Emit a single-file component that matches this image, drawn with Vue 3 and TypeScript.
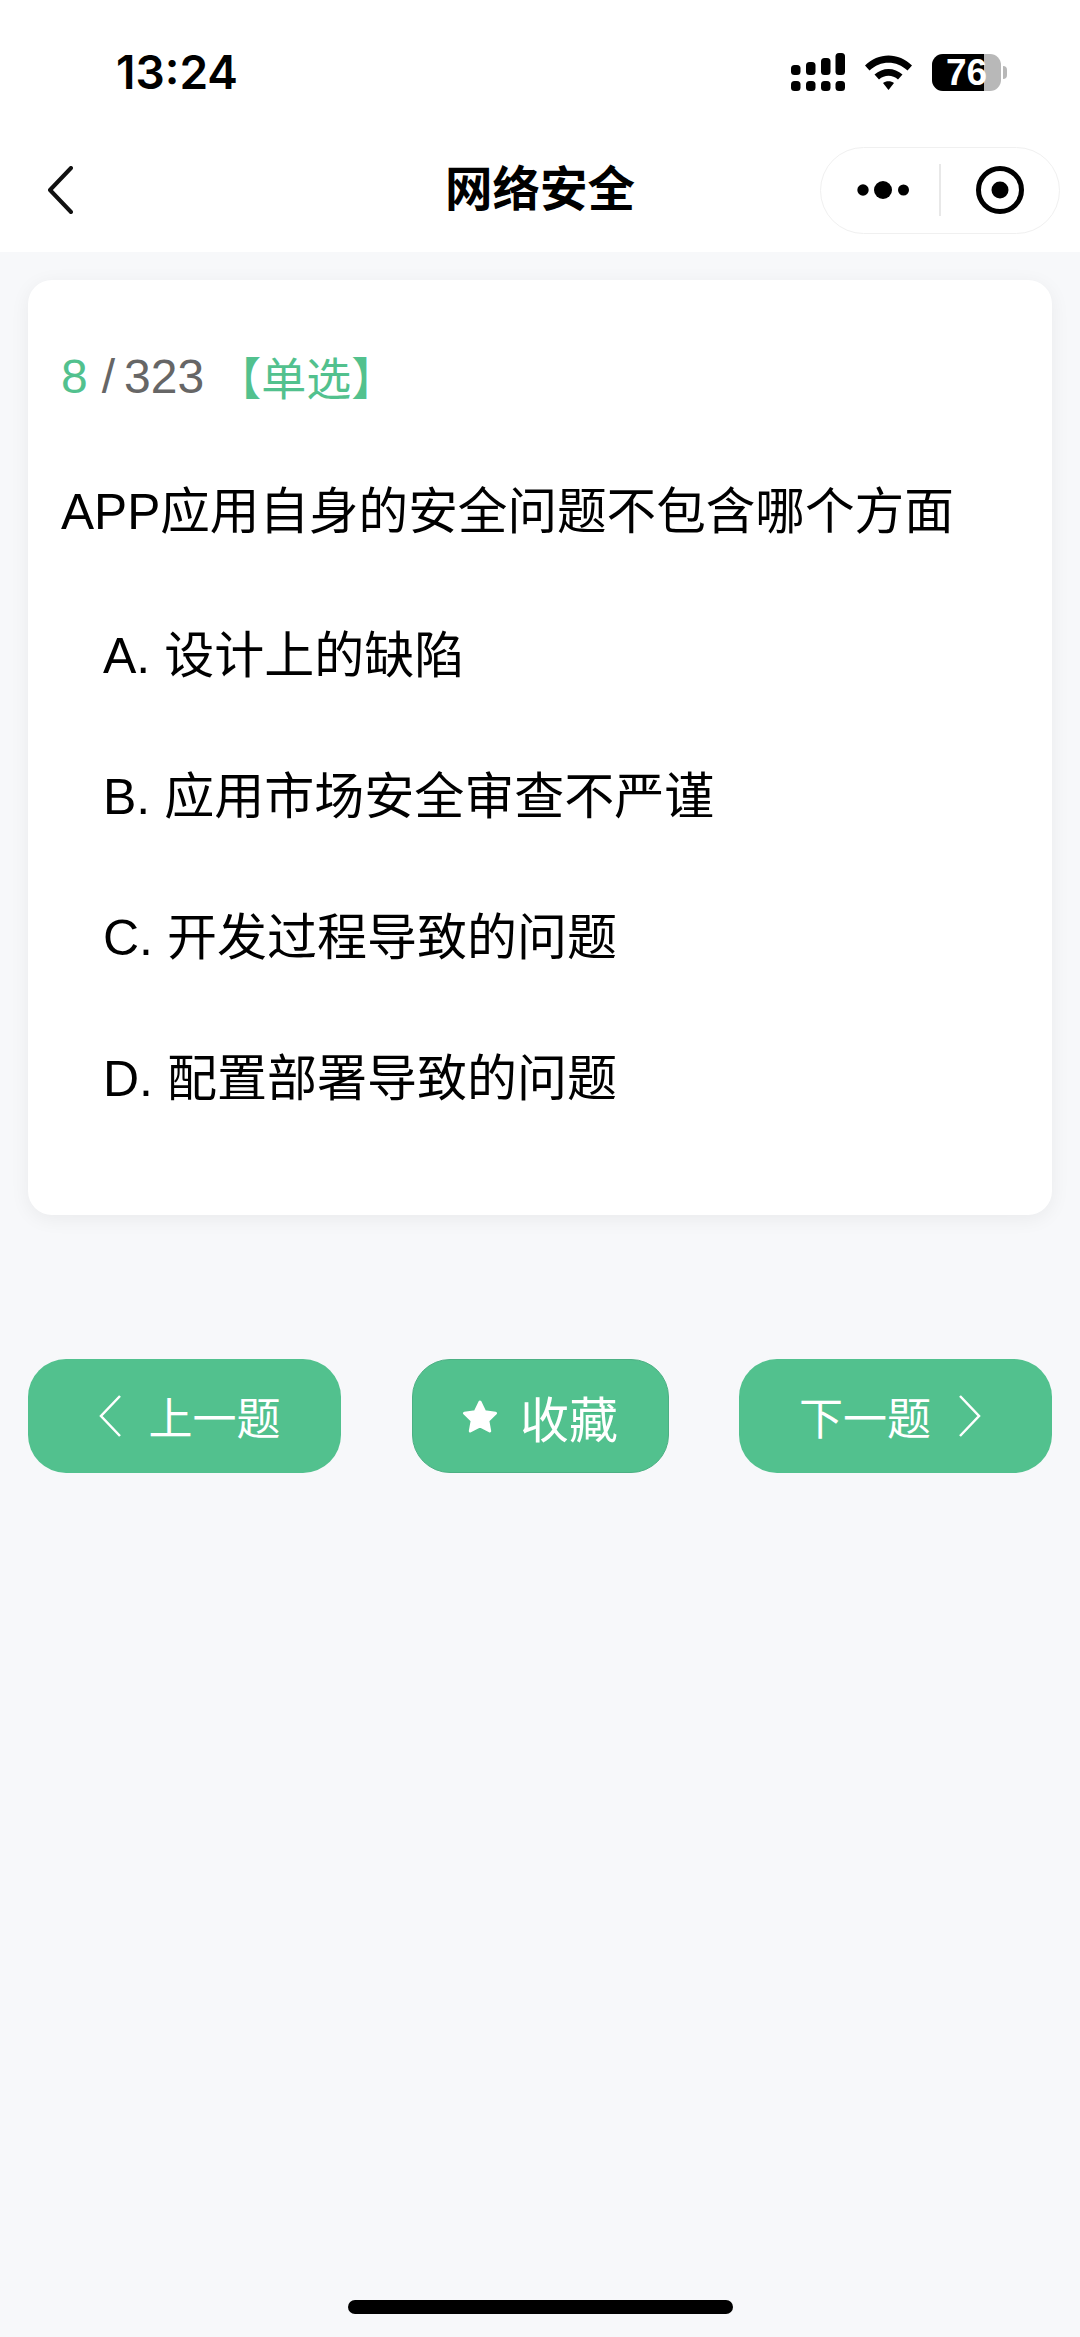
<script setup lang="ts">
const options = [
  { key: 'A', text: '设计上的缺陷' },
  { key: 'B', text: '应用市场安全审查不严谨' },
  { key: 'C', text: '开发过程导致的问题' },
  { key: 'D', text: '配置部署导致的问题' },
]

// upper segment of each signal bar, the lower row is all the same
const signalBars = [
  { x: 0, y: 12 },
  { x: 15, y: 9 },
  { x: 30, y: 5 },
  { x: 44.500, y: 0 },
]
</script>

<template>
  <div class="page">
    <header class="top">
      <div class="status">
        <span class="time">13:24</span>
        <div class="status-icons">
          <svg class="signal" width="54" height="38" viewBox="0 0 54 38">
            <g v-for="bar in signalBars" :key="bar.x">
              <rect :x="bar.x" :y="bar.y" width="9.500" :height="22 - bar.y" rx="3.500" />
              <rect :x="bar.x" y="28" width="9.500" height="10" rx="3.500" />
            </g>
          </svg>
          <svg class="wifi" width="47" height="35" viewBox="0 0 47 35">
            <path d="M0 10.500C13-3 34-3 47 10.500L42.500 15.500C31.500 5 15.500 5 4.500 15.500Z" />
            <path d="M9.500 19.500C17.500 12 29.500 12 37.500 19.500L33 24.500C27.500 19.500 19.500 19.500 14 24.500Z" />
            <path d="M18 28C21 25.500 26 25.500 29 28L23.500 35Z" />
          </svg>
          <div class="battery">
            <div class="battery-body">
              <div class="battery-fill"></div>
              <span class="battery-num">76</span>
            </div>
            <div class="battery-nub"></div>
          </div>
        </div>
      </div>
      <nav class="nav">
        <svg class="back" width="26" height="48" viewBox="0 0 26 48">
          <path d="M24 2L3 24L24 46" />
        </svg>
        <h1 class="title">网络安全</h1>
        <div class="capsule">
          <svg class="more" width="52" height="20" viewBox="0 0 52 20">
            <circle cx="6" cy="10" r="5.700" />
            <circle cx="26" cy="10" r="9" />
            <circle cx="46.500" cy="10" r="5.500" />
          </svg>
          <span class="capsule-line"></span>
          <svg class="target" width="48" height="48" viewBox="0 0 48 48">
            <circle class="target-ring" cx="24" cy="24" r="21.500" />
            <circle cx="24" cy="24" r="8.500" />
          </svg>
        </div>
      </nav>
    </header>

    <main class="content">
      <section class="card">
        <div class="progress">
          <span class="current">8</span>
          <span class="slash">/</span>
          <span class="total">323</span>
          <span class="kind">【单选】</span>
        </div>
        <p class="question">APP应用自身的安全问题不包含哪个方面</p>
        <ul class="options">
          <li v-for="opt in options" :key="opt.key" class="option">{{ opt.key }}. {{ opt.text }}</li>
        </ul>
      </section>

      <div class="actions">
        <button class="btn btn-side btn-prev">
          <svg class="chev" width="22" height="42" viewBox="0 0 22 42"><path d="M21 1L2 21L21 41" /></svg>
          <span>上一题</span>
        </button>
        <button class="btn btn-fav">
          <svg class="star" width="36" height="34" viewBox="0 0 36 34">
            <path d="M18 3L22.800 12.800L33.500 14.200L25.800 21.600L27.700 32L18 27L8.300 32L10.200 21.600L2.500 14.200L13.200 12.800Z" />
          </svg>
          <span>收藏</span>
        </button>
        <button class="btn btn-side btn-next">
          <span>下一题</span>
          <svg class="chev" width="22" height="42" viewBox="0 0 22 42"><path d="M1 1L20 21L1 41" /></svg>
        </button>
      </div>
    </main>

    <div class="home-bar"></div>
  </div>
</template>

<style scoped>
.page {
  position: relative;
  height: 2337px;
  overflow: hidden;
  background: #f7f8fa;
  font-family: "Liberation Sans", "Noto Sans CJK SC", sans-serif;
  color: #000;
}

.top {
  background: #fff;
  height: 252px;
}

.status {
  height: 128px;
  box-sizing: border-box;
  display: flex;
  justify-content: space-between;
  align-items: center;
  padding: 16px 73px 0 116px;
}

.time {
  font-family: Inter, "Liberation Sans", sans-serif;
  font-size: 46px;
  font-weight: 600;
  line-height: 1;
}

.status-icons {
  display: flex;
  align-items: center;
  gap: 20px;
}

.signal,
.wifi {
  fill: #000;
  display: block;
}

.battery {
  display: flex;
  align-items: center;
  gap: 2px;
}

.battery-body {
  position: relative;
  width: 69px;
  height: 37px;
  border-radius: 11px;
  background: #b8b8b8;
  display: flex;
  align-items: center;
  justify-content: center;
}

.battery-fill {
  position: absolute;
  left: 0;
  top: 0;
  bottom: 0;
  width: 76%;
  border-radius: 11px 0 0 11px;
  background: #000;
}

.battery-num {
  position: relative;
  color: #fff;
  font-size: 37px;
  font-weight: 700;
  line-height: 1;
}

.battery-nub {
  width: 4px;
  height: 13px;
  border-radius: 0 4px 4px 0;
  background: #b8b8b8;
}

.nav {
  position: relative;
  height: 124px;
  display: flex;
  align-items: center;
  justify-content: space-between;
  padding: 0 20px 0 47px;
}

.back path {
  fill: none;
  stroke: #111;
  stroke-width: 4;
  stroke-linecap: round;
  stroke-linejoin: round;
}

.title {
  position: absolute;
  left: 0;
  right: 0;
  margin: 0;
  text-align: center;
  font-size: 47.500px;
  font-weight: 700;
  line-height: 1;
}

.capsule {
  width: 240px;
  height: 87px;
  box-sizing: border-box;
  border: 1.500px solid #f0f0f0;
  border-radius: 44px;
  background: #fff;
  display: flex;
  align-items: center;
  padding: 0 0 0 35.500px;
}

.more {
  fill: #000;
}

.capsule-line {
  width: 2px;
  height: 52px;
  background: #e8e8e8;
  margin-left: 30px;
}

.target {
  fill: #000;
  margin-left: 35px;
}

.target-ring {
  fill: none;
  stroke: #000;
  stroke-width: 5;
}

.content {
  padding: 28px 28px 0;
}

.card {
  height: 935px;
  box-sizing: border-box;
  background: #fff;
  border-radius: 24px;
  box-shadow: 0 4px 20px rgba(0, 0, 0, 0.06);
  padding: 69px 33px 0;
}

.progress {
  display: flex;
  align-items: center;
  height: 54px;
  font-size: 48px;
}

.current {
  color: #52c18e;
}

.slash {
  color: #666;
  margin-left: 14px;
}

.total {
  color: #666;
  margin-left: 9px;
}

.kind {
  color: #52c18e;
  font-size: 45px;
  margin-left: 12px;
}

.question {
  margin: 74px 0 0;
  font-size: 49.600px;
  line-height: 70px;
}

.options {
  list-style: none;
  margin: 33px 0 0;
  padding: 0 0 0 42px;
}

.option {
  height: 141px;
  display: flex;
  align-items: center;
  font-size: 50px;
  white-space: pre;
}

.actions {
  margin-top: 144px;
  display: flex;
  justify-content: space-between;
}

.btn {
  height: 114px;
  border: none;
  border-radius: 38px;
  background: #52c18e;
  color: #fff;
  font-family: inherit;
  display: flex;
  align-items: center;
  justify-content: center;
  padding: 0;
}

.btn-side {
  width: 313px;
  font-size: 44px;
  gap: 28px;
}

.btn-prev {
  padding-left: 10px;
}

.btn-next {
  padding-right: 11px;
}

.btn-fav {
  width: 257px;
  font-size: 49px;
  gap: 22px;
  border: 1px solid #4cb083;
}

.chev path {
  fill: none;
  stroke: #fff;
  stroke-width: 2.500;
}

.star {
  fill: #fff;
  stroke: #fff;
  stroke-width: 3;
  stroke-linejoin: round;
}

.home-bar {
  position: absolute;
  left: 348px;
  bottom: 23px;
  width: 385px;
  height: 14px;
  border-radius: 7px;
  background: #000;
}
</style>
